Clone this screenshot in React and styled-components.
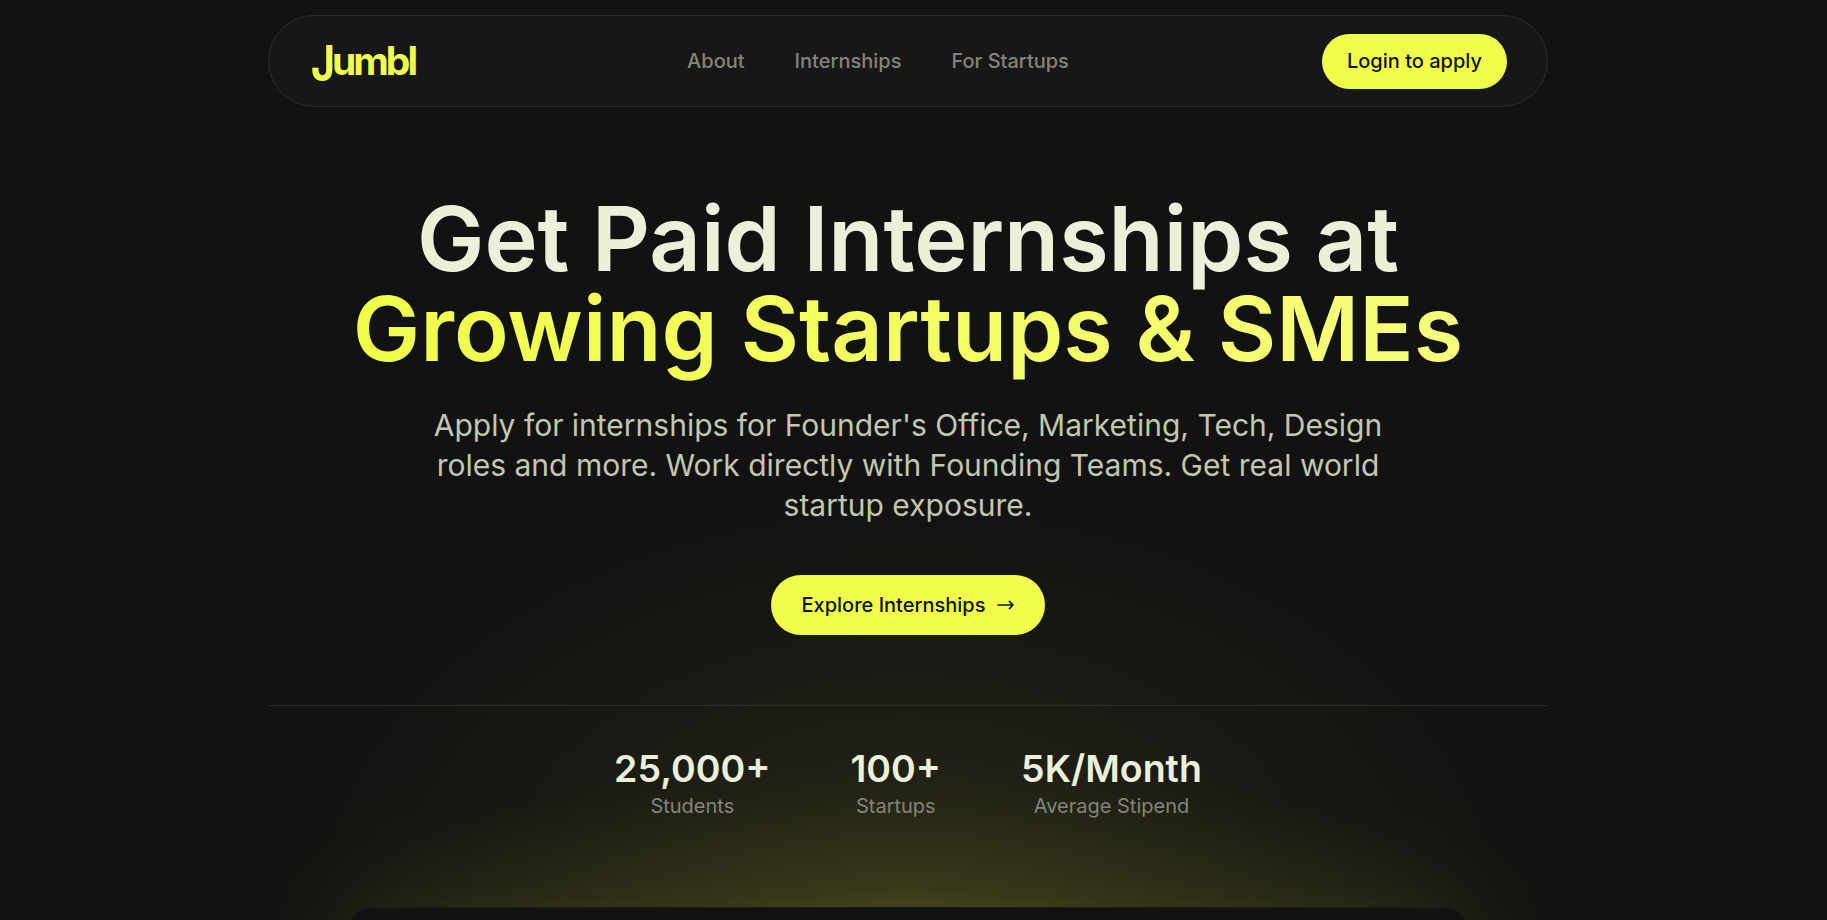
import React from 'react';
import styled, { createGlobalStyle } from 'styled-components';

const GlobalStyle = createGlobalStyle`
* { box-sizing: border-box; }
html, body { margin: 0; padding: 0; background: #121212; }
body {
    height: 920px;
    overflow: hidden;
    font-family: Inter, "Liberation Sans", sans-serif;
}
`;

const Page = styled.div`
position: relative;
height: 920px;
overflow: hidden;
padding: 15px 11px 0 0;
background: #121212;
display: flex;
flex-direction: column;
align-items: center;
& > * { flex-shrink: 0; }
`;

const Navbar = styled.nav`
width: 1280px;
height: 92px;
padding: 0 40px;
border: 1px solid #2e2e2a;
border-radius: 46px;
background: #171717;
display: flex;
align-items: center;
justify-content: space-between;
`;

const Logo = styled.div`
width: 125px;
padding: 0 0 4px 2px;
display: flex;
align-items: baseline;
color: #f0ff4b;
font: 700 39px/46px Inter, sans-serif;
letter-spacing: -3px;
& span {
    width: 21px;
    position: relative;
    top: 6px;
    font-size: 49px;
    letter-spacing: 0;
    transform: scaleX(0.84);
    transform-origin: left;
}
`;

const NavLinks = styled.div`
display: flex;
gap: 50px;
`;

const NavLink = styled.a`
color: #83857a;
font-size: 20px;
font-weight: 500;
line-height: 24px;
`;

const Button = styled.button`
height: ${props => props.$large ? '60px' : '55px'};
width: ${props => props.$large ? '274px' : '185px'};
padding: 0;
border: 0;
border-radius: 30px;
background: #f0ff4b;
color: #121212;
font: 500 20px/24px Inter, sans-serif;
display: flex;
align-items: center;
justify-content: center;
gap: 12px;
white-space: nowrap;
`;

const Hero = styled.section`
position: relative;
z-index: 1;
width: 1280px;
margin-top: 87px;
display: flex;
flex-direction: column;
align-items: center;
`;

const Title = styled.h1`
margin: 0;
font-size: 90px;
font-weight: 600;
line-height: 90px;
text-align: center;
white-space: nowrap;
color: #ebf1d8;
`;

const Accent = styled.span`
display: block;
padding-bottom: 10px;
margin-bottom: -10px;
background: linear-gradient(90deg, #f0ff4b, #f5ff7a);
background-clip: text;
-webkit-background-clip: text;
color: transparent;
`;

const Subtitle = styled.p`
width: 960px;
margin: 31px 0 50px;
color: #c1c8ae;
font-size: 30px;
line-height: 40px;
text-align: center;
`;

const Stats = styled.div`
width: 100%;
margin-top: 70px;
padding-top: 39px;
border-top: 1px solid #30302b;
display: flex;
justify-content: center;
gap: 80px;
`;

const Stat = styled.div`
display: flex;
flex-direction: column;
align-items: center;
`;

const StatValue = styled.strong`
color: #ebf1d8;
font-size: 37.5px;
font-weight: 600;
line-height: 47px;
`;

const StatLabel = styled.span`
color: #83857a;
font-size: 20px;
line-height: 24px;
margin-top: 2px;
`;

const Glow = styled.div`
position: absolute;
left: 0;
right: 11px;
top: 460px;
bottom: 0;
background:
    radial-gradient(ellipse 600px 170px at 50% 470px, rgba(255, 240, 75, 0.07), rgba(255, 240, 75, 0.03) 50%, transparent),
    radial-gradient(ellipse 640px 450px at 50% 470px, rgba(245, 250, 75, 0.1), rgba(245, 250, 75, 0.052) 45%, rgba(245, 250, 75, 0.025) 70%, transparent);
`;

const Preview = styled.div`
position: relative;
width: 1120px;
height: 600px;
margin-top: 89px;
border: 1px solid #1b1c13;
border-radius: 24px;
background: #121212;
box-shadow: 0 0 140px rgba(240, 255, 75, 0.11), 0 0 50px rgba(240, 255, 75, 0.03);
`;

const stats = [
    { value: '25,000+', label: 'Students' },
    { value: '100+', label: 'Startups' },
    { value: '5K/Month', label: 'Average Stipend' },
];

const Arrow = () => (
    <svg width="17" height="10" viewBox="0 0 17 10" fill="none" stroke="#121212" strokeWidth="1.6" strokeLinecap="round" strokeLinejoin="round">
        <path d="M1 5h15M12.4 1.4 16 5l-3.6 3.6" />
    </svg>
);

export default function App() {
    return (
        <>
            <GlobalStyle />
            <Page>
                <Glow />
                <Navbar>
                    <Logo><span>J</span>umbl</Logo>
                    <NavLinks>
                        <NavLink>About</NavLink>
                        <NavLink>Internships</NavLink>
                        <NavLink>For Startups</NavLink>
                    </NavLinks>
                    <Button>Login to apply</Button>
                </Navbar>
                <Hero>
                    <Title>
                        Get Paid Internships at
                        <Accent>Growing Startups &amp; SMEs</Accent>
                    </Title>
                    <Subtitle>
                        Apply for internships for Founder's Office, Marketing, Tech, Design roles and more. Work directly with Founding Teams. Get real world startup exposure.
                    </Subtitle>
                    <Button $large>Explore Internships <Arrow /></Button>
                    <Stats>
                        {stats.map(stat => (
                            <Stat key={stat.label}>
                                <StatValue>{stat.value}</StatValue>
                                <StatLabel>{stat.label}</StatLabel>
                            </Stat>
                        ))}
                    </Stats>
                </Hero>
                <Preview />
            </Page>
        </>
    );
}
